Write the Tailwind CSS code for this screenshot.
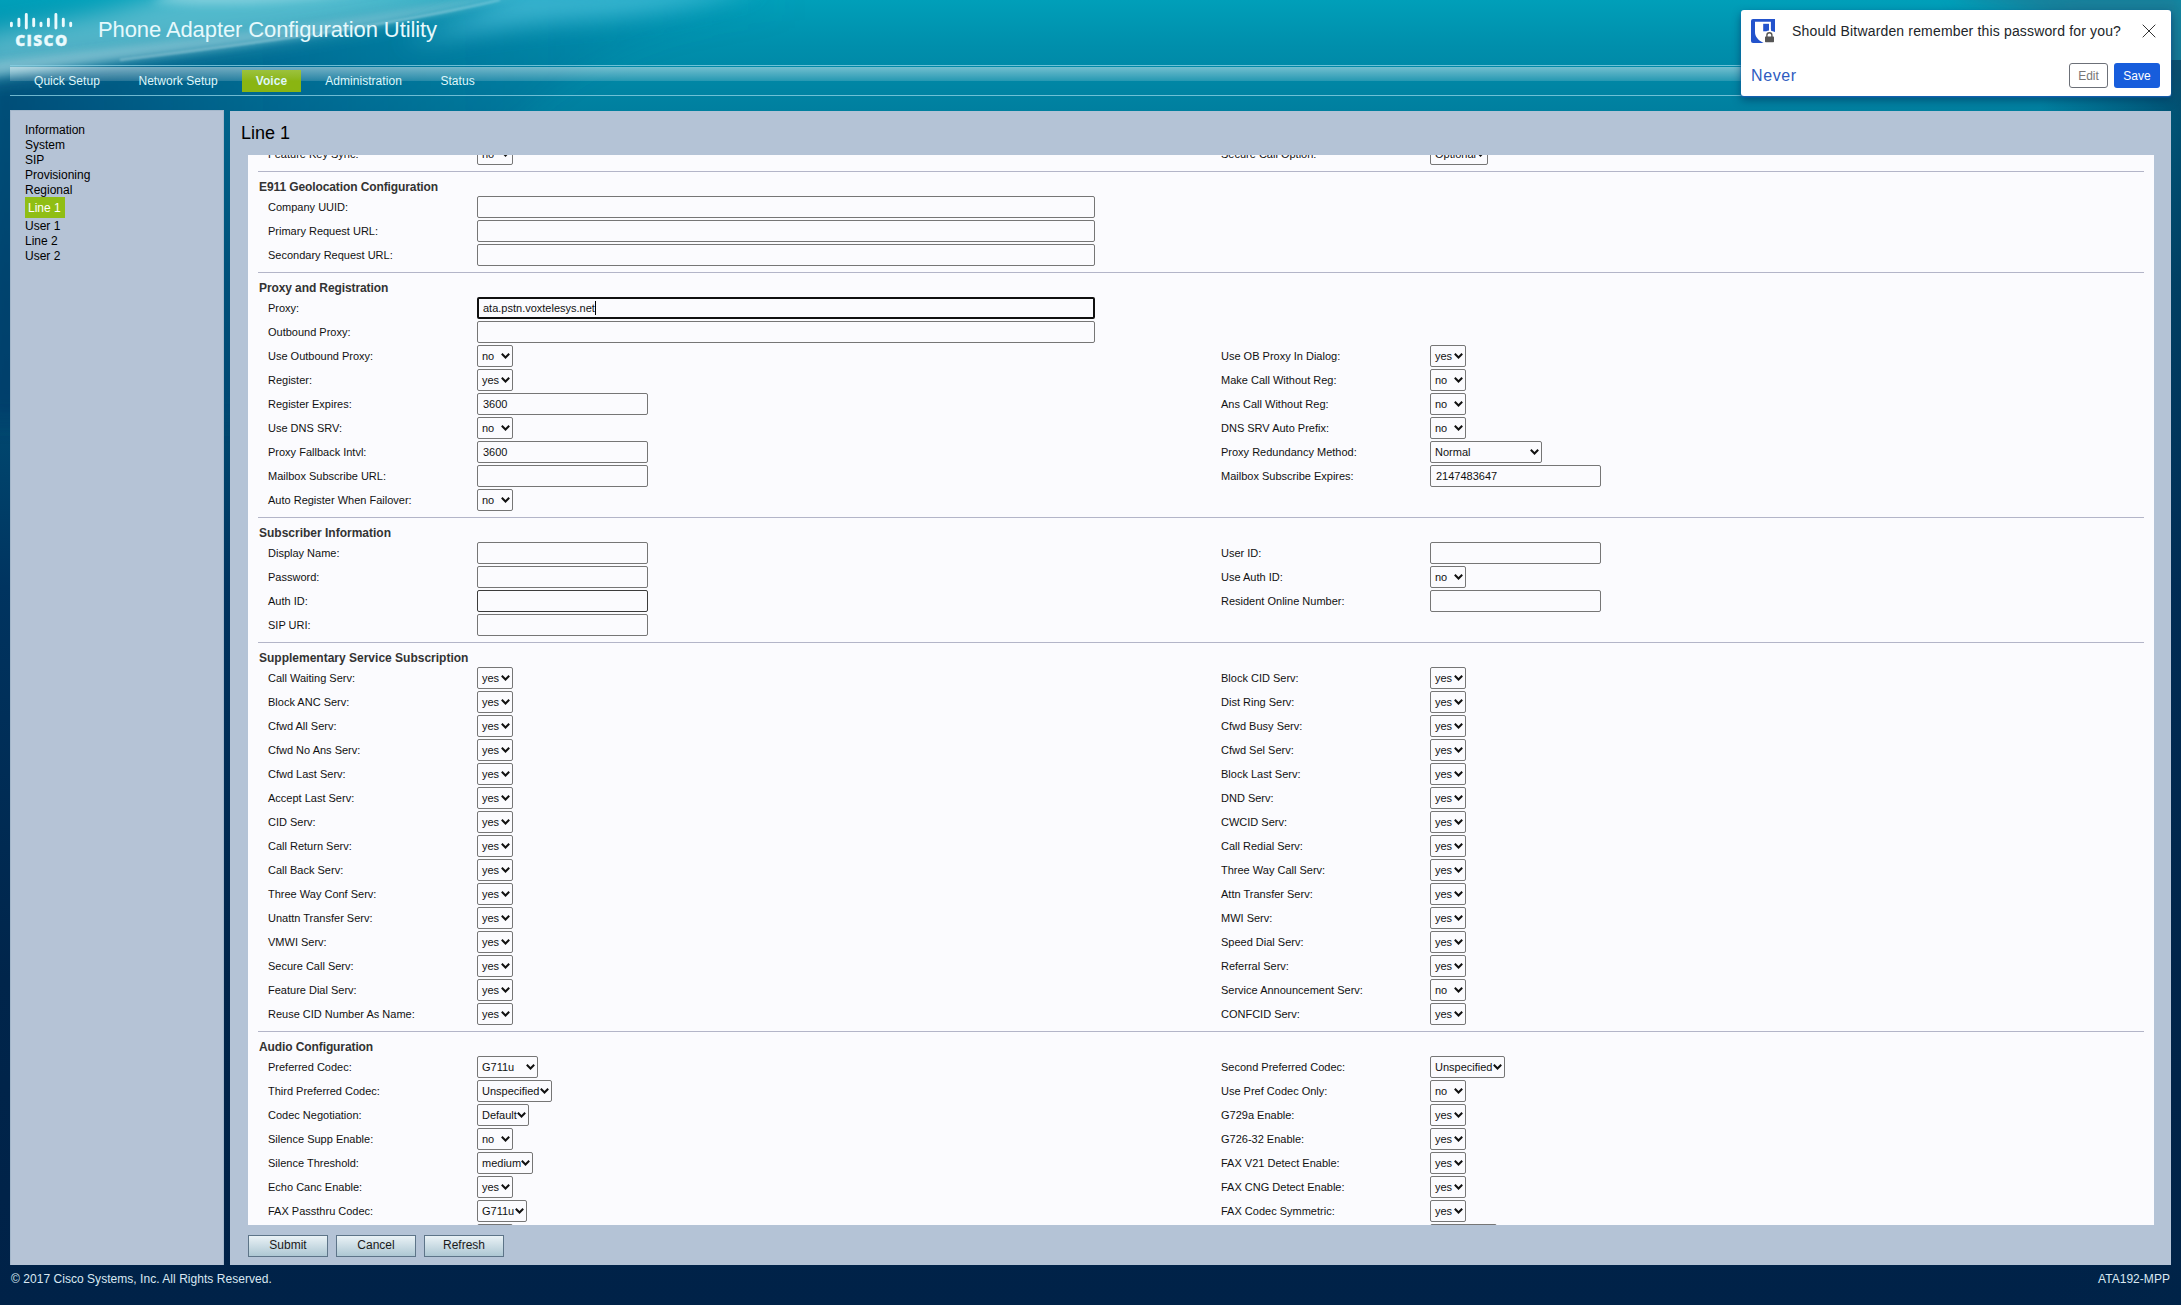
<!DOCTYPE html>
<html lang="en">

<head>
  <meta charset="UTF-8">
  <meta name="viewport" content="width=device-width, initial-scale=1.0">
  <title>Phone Adapter Configuration Utility</title>
  <script src="https://cdn.jsdelivr.net/npm/@tailwindcss/browser@4"></script>
</head>

<body class="relative h-[1305px] overflow-hidden bg-[#00244a] font-['Liberation_Sans',Arial,sans-serif] text-xs text-black">
  <!-- Backdrop -->
  <svg class="absolute inset-0 h-full w-full" viewBox="0 0 2181 1305" preserveAspectRatio="none" aria-hidden="true">
    <defs>
      <linearGradient id="sea" x1="0" y1="0" x2="0" y2="1">
        <stop offset="0" stop-color="#009fb9" />
        <stop offset=".035" stop-color="#008fac" />
        <stop offset=".085" stop-color="#007f9f" />
        <stop offset=".22" stop-color="#00587c" />
        <stop offset=".45" stop-color="#003460" />
        <stop offset=".75" stop-color="#00254b" />
        <stop offset="1" stop-color="#002248" />
      </linearGradient>
      <linearGradient id="left" x1="0" y1="0" x2="1" y2="0">
        <stop offset="0" stop-color="#003a68" stop-opacity=".75" />
        <stop offset=".35" stop-color="#00487a" stop-opacity=".45" />
        <stop offset="1" stop-color="#006a98" stop-opacity="0" />
      </linearGradient>
      <linearGradient id="right" x1="0" y1="0" x2="1" y2="0">
        <stop offset="0" stop-color="#002448" stop-opacity="0" />
        <stop offset="1" stop-color="#002448" stop-opacity=".5" />
      </linearGradient>
      <filter id="soft8" x="-20%" y="-60%" width="140%" height="220%"><feGaussianBlur stdDeviation="11" /></filter>
      <filter id="soft3" x="-20%" y="-60%" width="140%" height="220%"><feGaussianBlur stdDeviation="4" /></filter>
      <filter id="soft1" x="-20%" y="-60%" width="140%" height="220%"><feGaussianBlur stdDeviation="1" /></filter>
    </defs>
    <rect width="2181" height="1305" fill="url(#sea)" />
    <path d="M-20 75C180 50 340 25 520 -10H800V20C640 25 560 70 480 160L330 420H-20z" fill="url(#left)" filter="url(#soft8)" />
    <path d="M-20 34C60 20 110 14 190 -15L520 -15C380 30 180 50 -20 76z" fill="#b4dfe8" opacity=".45" filter="url(#soft8)" />
    <path d="M150 2C220 8 320 4 400 -14H190z" fill="#dff4f8" opacity=".35" filter="url(#soft3)" />
    <path d="M-10 62C120 46 330 28 495 -6L520 -6C350 38 170 50 -10 77z" fill="#c4e4ec" opacity=".45" filter="url(#soft3)" />
    <path d="M120 60C250 44 400 24 500 0" fill="none" stroke="#d5f0f5" stroke-width="1.5" opacity=".5" filter="url(#soft1)" />
    <path d="M520 -15H760C700 8 640 16 560 22C510 27 450 36 400 44C440 30 490 8 520 -15z" fill="#5cc8e2" opacity=".6" filter="url(#soft8)" />
    <path d="M1960 -15H2190V110C2150 60 2080 20 1960 -5z" fill="#335d78" opacity=".5" filter="url(#soft8)" />
    <rect x="2040" y="60" width="141" height="1245" fill="url(#right)" />
  </svg>

  <div class="relative flex h-full flex-col px-2.5">
    <!-- Logo and title -->
    <header class="flex h-[65px] shrink-0">
      <svg class="h-[50px] w-16" viewBox="10 0 64 50" fill="none" stroke="#eafafd" stroke-linecap="round" stroke-width="2.9">
        <path d="M11.4 23.2v2.600M18.900 19.200v6.600M26.300 14.500v13.500M33.700 19.200v6.600M41 23.200v2.600M48.400 19.200v6.600M55.900 14.500v13.500M63.300 19.200v6.600M70.700 23.200v2.600" />
        <text x="15.2" y="45.8" fill="#eafafd" stroke-width=".3" font-family="Open Sans, sans-serif" font-weight="800" font-size="15.4" textLength="52" lengthAdjust="spacing">CISCO</text>
      </svg>
      <h1 class="ml-6 mt-[15px] text-[22px] leading-[30px] tracking-[-0.1px] text-[#e6f9fc]">Phone Adapter Configuration Utility</h1>
    </header>

    <!-- Top menu -->
    <nav class="flex h-[31px] shrink-0 border-y border-[#8ad0e2]/80 tracking-[0.05px] text-[#dff6fa]">
      <div class="mt-px flex h-[28px] grow items-start bg-gradient-to-b from-white/45 to-white/15 bg-[length:100%_14px] bg-no-repeat pt-[3px] leading-[22px]">
        <a class="ml-[10px] px-[14px]">Quick Setup</a>
        <a class="ml-[10.5px] px-[14px]">Network Setup</a>
        <a class="ml-[10px] h-[22px] bg-gradient-to-b from-[#9cc23c] to-[#8ab512] to-50% px-[14px] font-bold">Voice</a>
        <a class="ml-[10px] px-[14px]">Administration</a>
        <a class="ml-[10.5px] px-[14px]">Status</a>
      </div>
    </nav>

    <div class="mt-[14px] flex h-[1155px] shrink-0 gap-[6px]">
      <!-- Sidebar -->
      <aside class="w-[214px] shrink-0 border border-b-0 border-[#a4b7cb] bg-[#b5c3d6] pl-[14px] pt-3 leading-[15px]">
        <ul>
          <li>Information</li>
          <li>System</li>
          <li>SIP</li>
          <li>Provisioning</li>
          <li>Regional</li>
          <li class="-mt-px mb-px h-[21px] w-10 bg-[#90be14] pl-[3px] leading-[22px] text-white">Line 1</li>
          <li>User 1</li>
          <li>Line 2</li>
          <li>User 2</li>
        </ul>
      </aside>

      <!-- Settings -->
      <main class="mt-px flex grow flex-col bg-[#b4c3d6] pl-[18px] pr-[17px]">
        <h2 class="-ml-[7px] h-11 shrink-0 text-lg leading-[45px]">Line 1</h2>
        <div class="h-[1070px] shrink-0 overflow-hidden bg-[#fbfbfe]">
          <div id="sections" class="-mt-[37px]"></div>
        </div>
        <div class="mt-[10px] flex gap-2 leading-[18px] text-[#1a1a1a]">
          <button class="h-[22px] w-20 border border-[#5d7488] bg-gradient-to-b from-[#eaf2f6] to-[#adc7d3] pb-0.5">Submit</button>
          <button class="h-[22px] w-20 border border-[#5d7488] bg-gradient-to-b from-[#eaf2f6] to-[#adc7d3] pb-0.5">Cancel</button>
          <button class="h-[22px] w-20 border border-[#5d7488] bg-gradient-to-b from-[#eaf2f6] to-[#adc7d3] pb-0.5">Refresh</button>
        </div>
      </main>
    </div>

    <footer class="flex justify-between px-px pt-[6px] leading-4 tracking-[0.04px] text-[#d9e8f2]">
      <span>© 2017 Cisco Systems, Inc. All Rights Reserved.</span>
      <span>ATA192-MPP</span>
    </footer>
  </div>

  <!-- Password manager prompt -->
  <div class="absolute left-[1741px] top-[10px] h-[86px] w-[430px] rounded-[3px] bg-white px-[10px] shadow-[0_1px_2px_#1a62c0,0_4px_8px_rgba(0,50,90,.6)]">
    <div class="flex h-[42px] items-center">
      <svg class="h-6 w-6" viewBox="0 0 24 24">
        <rect width="24" height="24" rx="2" fill="#2353cc" />
        <path d="M4 2.800h16v9L24 13v11H12.500C7 21 4 17.500 4 13z" fill="#fff" />
        <path d="M12.200 4.800h5.800v7.500h-5.800z" fill="#2353cc" />
        <path d="M19.900 0H24v12l-4.100-2z" fill="#2353cc" />
        <path d="M15.700 18v-1.800a2.600 2.600 0 0 1 5.200 0V18" fill="none" stroke="#fff" stroke-width="4" />
        <rect x="14" y="17.500" width="9" height="5.800" rx=".7" fill="#555" />
        <path d="M15.900 18v-1.700a2.500 2.500 0 0 1 5 0V18" fill="none" stroke="#555" stroke-width="1.400" />
      </svg>
      <p class="ml-[17px] text-sm tracking-[0.16px] text-[#212529]">Should Bitwarden remember this password for you?</p>
      <svg class="ml-auto mr-[5px] h-[14px] w-[14px]" viewBox="0 0 14 14" fill="none" stroke="#333" stroke-width="1"><path d="M.7.7l12.600 12.600M13.300.7L.7 13.300" /></svg>
    </div>
    <div class="flex items-center pt-[11px]">
      <a class="text-base leading-[25px] tracking-[0.6px] text-[#2e5bbf]">Never</a>
      <button class="ml-auto h-[25px] w-[39px] rounded-[3px] border border-[#6c7078] text-[#777]">Edit</button>
      <button class="ml-[6px] mr-px h-[25px] w-[46px] rounded-[3px] bg-[#175ddc] text-white">Save</button>
    </div>
  </div>

  <script>
    // select widths follow the longest option of each list
    const sel = (label, value = 'yes', width = 36) => ({ label, value, width, type: 'select' });
    const inp = (label, value = '', width = 171) => ({ label, value, width, type: 'input' });

    const sections = [
      { title: '', rows: [
        [sel('Feature Key Sync:', 'no'), sel('Secure Call Option:', 'Optional', 58)],
      ]},
      { title: 'E911 Geolocation Configuration', tight: true, rows: [
        [inp('Company UUID:', '', 618)],
        [inp('Primary Request URL:', '', 618)],
        [inp('Secondary Request URL:', '', 618)],
      ]},
      { title: 'Proxy and Registration', tight: true, rows: [
        [{ ...inp('Proxy:', 'ata.pstn.voxtelesys.net', 618), focused: true }],
        [inp('Outbound Proxy:', '', 618)],
        [sel('Use Outbound Proxy:', 'no'), sel('Use OB Proxy In Dialog:')],
        [sel('Register:'), sel('Make Call Without Reg:', 'no')],
        [inp('Register Expires:', '3600'), sel('Ans Call Without Reg:', 'no')],
        [sel('Use DNS SRV:', 'no'), sel('DNS SRV Auto Prefix:', 'no')],
        [inp('Proxy Fallback Intvl:', '3600'), sel('Proxy Redundancy Method:', 'Normal', 112)],
        [inp('Mailbox Subscribe URL:'), inp('Mailbox Subscribe Expires:', '2147483647')],
        [sel('Auto Register When Failover:', 'no')],
      ]},
      { title: 'Subscriber Information', rows: [
        [inp('Display Name:'), inp('User ID:')],
        [inp('Password:'), sel('Use Auth ID:', 'no')],
        [{ ...inp('Auth ID:'), dark: true }, inp('Resident Online Number:')],
        [inp('SIP URI:')],
      ]},
      { title: 'Supplementary Service Subscription', rows: [
        [sel('Call Waiting Serv:'), sel('Block CID Serv:')],
        [sel('Block ANC Serv:'), sel('Dist Ring Serv:')],
        [sel('Cfwd All Serv:'), sel('Cfwd Busy Serv:')],
        [sel('Cfwd No Ans Serv:'), sel('Cfwd Sel Serv:')],
        [sel('Cfwd Last Serv:'), sel('Block Last Serv:')],
        [sel('Accept Last Serv:'), sel('DND Serv:')],
        [sel('CID Serv:'), sel('CWCID Serv:')],
        [sel('Call Return Serv:'), sel('Call Redial Serv:')],
        [sel('Call Back Serv:'), sel('Three Way Call Serv:')],
        [sel('Three Way Conf Serv:'), sel('Attn Transfer Serv:')],
        [sel('Unattn Transfer Serv:'), sel('MWI Serv:')],
        [sel('VMWI Serv:'), sel('Speed Dial Serv:')],
        [sel('Secure Call Serv:'), sel('Referral Serv:')],
        [sel('Feature Dial Serv:'), sel('Service Announcement Serv:', 'no')],
        [sel('Reuse CID Number As Name:'), sel('CONFCID Serv:')],
      ]},
      { title: 'Audio Configuration', tight: true, rows: [
        [sel('Preferred Codec:', 'G711u', 61), sel('Second Preferred Codec:', 'Unspecified', 75)],
        [sel('Third Preferred Codec:', 'Unspecified', 75), sel('Use Pref Codec Only:', 'no')],
        [sel('Codec Negotiation:', 'Default', 52), sel('G729a Enable:')],
        [sel('Silence Supp Enable:', 'no'), sel('G726-32 Enable:')],
        [sel('Silence Threshold:', 'medium', 56), sel('FAX V21 Detect Enable:')],
        [sel('Echo Canc Enable:'), sel('FAX CNG Detect Enable:')],
        [sel('FAX Passthru Codec:', 'G711u', 50), sel('FAX Codec Symmetric:')],
        [sel('', ''), sel('', '', 67)],
      ]},
    ];

    const control = (f) => {
      if (f.type === 'select') {
        return `
          <div class="flex h-[22px] items-center justify-between rounded-[2px] border border-[#767676] bg-[#fbfbfe] pl-1 pr-[2px]" style="width: ${f.width}px">
            <span>${f.value}</span>
            <svg class="h-[6px] w-[9px] shrink-0" viewBox="0 0 9 6" fill="none" stroke="#111" stroke-width="2"><path d="M.8.8l3.700 3.700L8.200.8" /></svg>
          </div>`;
      }
      const border = f.focused ? 'border-2 border-[#101010] pl-1' : f.dark ? 'border border-[#3c3c3c] pl-[5px]' : 'border border-[#767676] pl-[5px]';
      const caret = f.focused ? '<span class="h-[14px] w-px bg-black"></span>' : '';
      return `
        <div class="flex h-[22px] items-center rounded-[2px] bg-[#fbfbfe] ${border}" style="width: ${f.width}px">
          <span>${f.value}</span>${caret}
        </div>`;
    };

    const field = (f) => `
      <div class="flex w-1/2 pl-5">
        <label class="w-[209px] shrink-0 leading-[22px]">${f.label}</label>
        ${control(f)}
      </div>`;

    document.getElementById('sections').innerHTML = sections.map(s => `
      <section class="pb-1">
        <div class="mx-[10px] h-[25px] border-t border-[#b3b5c8] pl-px pt-[7px] text-xs font-bold leading-4 text-[#333] ${s.tight ? 'tracking-[-0.1px]' : ''}">${s.title}</div>
        ${s.rows.map(r => `<div class="flex h-6 text-[11px] text-[#111]">${r.map(field).join('')}</div>`).join('')}
      </section>
    `).join('');
  </script>
</body>

</html>
